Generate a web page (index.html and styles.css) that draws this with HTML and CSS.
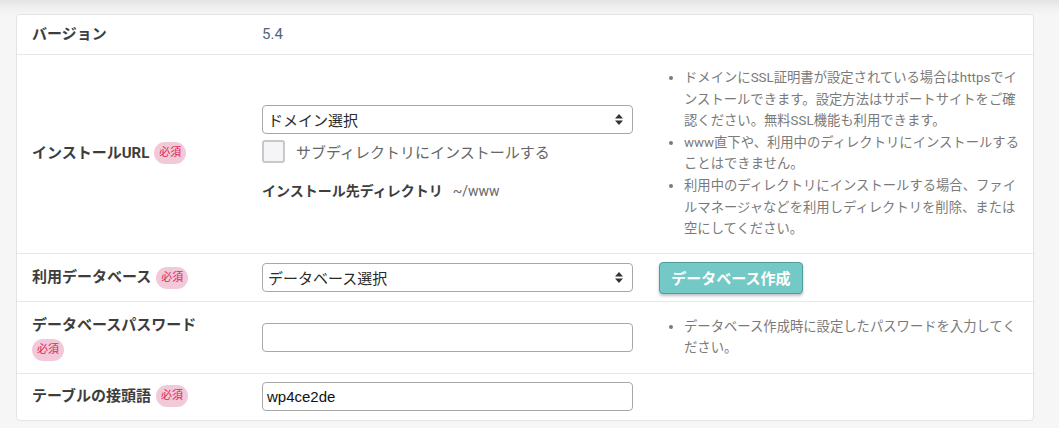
FILE: index.html
```html
<!DOCTYPE html>
<html lang="ja">
<head>
<meta charset="utf-8">
<link rel="stylesheet" href="styles.css">
</head>
<body>
<div class="page">
  <div class="card">
    <div class="row row-version">
      <div class="label">バージョン</div>
      <div class="value version">5.4</div>
    </div>

    <div class="row row-url">
      <div class="label">インストールURL<span class="badge">必須</span></div>
      <div class="value stack">
        <div class="select">
          <span>ドメイン選択</span>
          <svg class="arrows" width="8" height="11" viewBox="0 0 8 11"><path d="M4 0 L8 4.5 H0 Z M0 6.5 H8 L4 11 Z" fill="#333"/></svg>
        </div>
        <label class="check">
          <span class="box"></span>
          <span class="check-text">サブディレクトリにインストールする</span>
        </label>
        <div class="dir"><span class="dir-label">インストール先ディレクトリ</span><span class="dir-path">~/www</span></div>
      </div>
      <div class="notes">
        <ul>
          <li>ドメインにSSL証明書が設定されている場合はhttpsでインストールできます。設定方法はサポートサイトをご確認ください。無料SSL機能も利用できます。</li>
          <li>www直下や、利用中のディレクトリにインストールすることはできません。</li>
          <li>利用中のディレクトリにインストールする場合、ファイルマネージャなどを利用しディレクトリを削除、または空にしてください。</li>
        </ul>
      </div>
    </div>

    <div class="row row-db">
      <div class="label">利用データベース<span class="badge">必須</span></div>
      <div class="value">
        <div class="select">
          <span>データベース選択</span>
          <svg class="arrows" width="8" height="11" viewBox="0 0 8 11"><path d="M4 0 L8 4.5 H0 Z M0 6.5 H8 L4 11 Z" fill="#333"/></svg>
        </div>
      </div>
      <div class="notes">
        <button class="btn">データベース作成</button>
      </div>
    </div>

    <div class="row row-pass">
      <div class="label label-block">
        <div>データベースパスワード</div>
        <span class="badge badge-block">必須</span>
      </div>
      <div class="value"><div class="input"></div></div>
      <div class="notes">
        <ul>
          <li>データベース作成時に設定したパスワードを入力してください。</li>
        </ul>
      </div>
    </div>

    <div class="row row-prefix">
      <div class="label">テーブルの接頭語<span class="badge">必須</span></div>
      <div class="value"><div class="input input-text">wp4ce2de</div></div>
      <div class="notes"></div>
    </div>
  </div>
</div>
</body>
</html>
```

FILE: styles.css
```css
* { box-sizing: border-box; }

html, body {
  margin: 0;
  padding: 0;
}

body {
  background: linear-gradient(#e4e4e4 0px, #f0f0f0 8px, #f6f6f6 16px) #f6f6f6;
  background-repeat: no-repeat;
  font-family: "Roboto", "Noto Sans CJK JP", sans-serif;
  color: #3a3a3a;
  height: 428px;
  overflow: hidden;
}

.page {
  padding: 14px 25px 0 16px;
}

.card {
  background: #fff;
  border: 1px solid #e4e4e4;
  border-radius: 4px;
  width: 1018px;
}

.row {
  display: grid;
  grid-template-columns: 230px 371px 1fr;
  align-items: center;
  padding: 0 6px 0 15px;
  border-bottom: 1px solid #e8e8e8;
}

.row:last-child { border-bottom: none; }

.row-version { padding-top: 8px; padding-bottom: 8px; min-height: 40px; }
.row-url { padding-top: 12px; padding-bottom: 13px; }
.row-db { padding-top: 8px; padding-bottom: 7px; }
.row-pass { padding-top: 12px; padding-bottom: 12px; }
.row-prefix { padding-top: 8px; padding-bottom: 9px; }

.label {
  font-size: 15px;
  font-weight: bold;
  line-height: 23px;
  color: #3d3d3d;
  display: flex;
  align-items: center;
}

.label-block {
  display: block;
}

.badge {
  display: inline-block;
  margin-left: 5px;
  height: 22px;
  line-height: 22px;
  padding: 0 5px;
  border-radius: 11px;
  background: #f2c9d9;
  color: #dc2458;
  font-size: 11px;
  font-weight: normal;
}

.badge-block {
  margin-left: 0;
  margin-top: 2px;
}

.value {
  font-size: 15px;
}

.version {
  color: #52657a;
  font-size: 15px;
  line-height: 23px;
}

.stack {
  display: flex;
  flex-direction: column;
  align-items: flex-start;
}

.select, .input {
  width: 371px;
  height: 29px;
  border: 1px solid #a8a8a8;
  border-radius: 4px;
  display: flex;
  align-items: center;
  justify-content: space-between;
  padding: 0 9px 0 5px;
  font-size: 15px;
  color: #2a2a2a;
  background: #fff;
}

.arrows { display: block; }

.input-text {
  font-family: "Liberation Sans", Arial, sans-serif;
  color: #111;
  padding-left: 4px;
}

.check {
  display: flex;
  align-items: center;
  margin-top: 6px;
}

.box {
  width: 23px;
  height: 23px;
  border: 2px solid #c8c8c8;
  border-radius: 3px;
  background: #f5f5f8;
  margin-right: 11px;
}

.check-text {
  color: #666;
  font-size: 15px;
}

.dir {
  margin-top: 18px;
  font-size: 14px;
  line-height: 20px;
}

.dir-label {
  font-weight: bold;
  color: #3d3d3d;
  margin-right: 10px;
}

.dir-path {
  color: #666;
}

.notes {
  padding-left: 26px;
}

.notes ul {
  margin: 0;
  padding-left: 25px;
  font-size: 13.33px;
  line-height: 21.6px;
  color: #7a7a7a;
}

.btn {
  display: block;
  height: 32px;
  width: 144px;
  padding: 0;
  background: #74c9c6;
  border: 1px solid #4f9e9b;
  border-radius: 4px;
  box-shadow: 0 2px 3px rgba(0, 0, 0, 0.25);
  color: #fff;
  font-family: "Roboto", "Noto Sans CJK JP", sans-serif;
  font-size: 15px;
  font-weight: bold;
}
```
